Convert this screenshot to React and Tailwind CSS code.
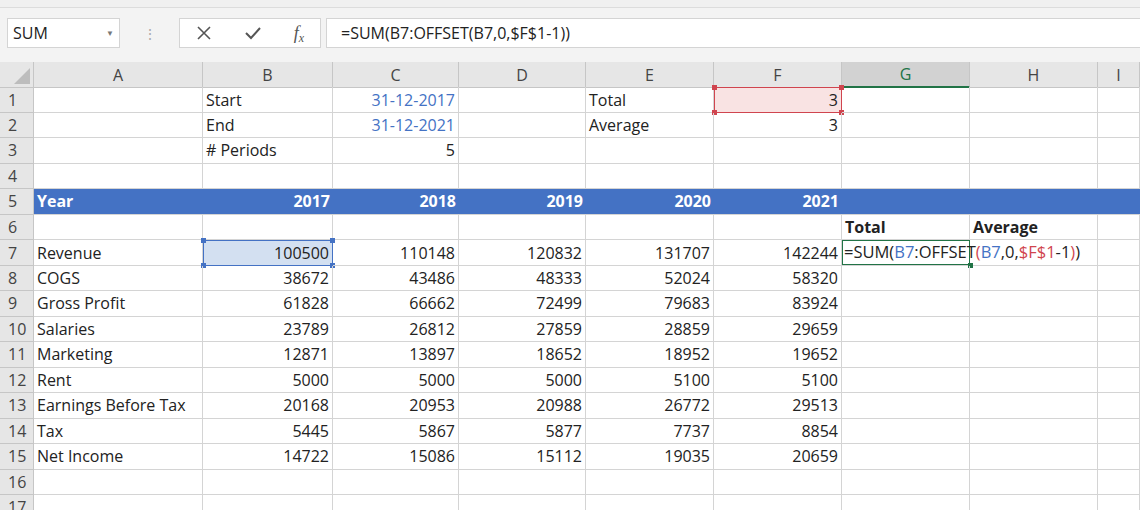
import React from "react";

const tpl = "grid-cols-[34px_169px_130px_126px_127px_128px_128px_128px_128px_42px]";
const letters = ["A", "B", "C", "D", "E", "F", "G", "H", "I"];

const data = [
  ["Revenue", 100500, 110148, 120832, 131707, 142244],
  ["COGS", 38672, 43486, 48333, 52024, 58320],
  ["Gross Profit", 61828, 66662, 72499, 79683, 83924],
  ["Salaries", 23789, 26812, 27859, 28859, 29659],
  ["Marketing", 12871, 13897, 18652, 18952, 19652],
  ["Rent", 5000, 5000, 5000, 5100, 5100],
  ["Earnings Before Tax", 20168, 20953, 20988, 26772, 29513],
  ["Tax", 5445, 5867, 5877, 7737, 8854],
  ["Net Income", 14722, 15086, 15112, 19035, 20659],
];

function Cell({ children, className = "" }) {
  return (
    <div className={"h-full border-r border-b border-[#d4d4d4] px-[3px] flex items-center whitespace-nowrap overflow-visible relative " + className}>
      {children}
    </div>
  );
}

function RowHead({ n }) {
  return (
    <div className="h-full bg-[#e6e6e6] border-r border-b border-[#c6c6c6] flex items-center pl-[8px] text-[#444]">{n}</div>
  );
}

function Row({ n, cells }) {
  return (
    <div className={"grid h-[25.5px] " + tpl}>
      <RowHead n={n} />
      {cells.map((c, i) => (
        <div key={i} className="h-full min-w-0">{c}</div>
      ))}
    </div>
  );
}

const empty = (k) => <Cell key={k} />;

function Handles({ color }) {
  return (
    <>
      <span className={"absolute -left-[3px] -top-[3px] w-[5px] h-[5px] " + color} />
      <span className={"absolute -right-[3px] -top-[3px] w-[5px] h-[5px] " + color} />
      <span className={"absolute -left-[3px] -bottom-[3px] w-[5px] h-[5px] " + color} />
      <span className={"absolute -right-[3px] -bottom-[3px] w-[5px] h-[5px] " + color} />
    </>
  );
}

export default function App() {
  const rows = [];
  rows.push(
    <Row key={1} n={1} cells={[
      empty(0),
      <Cell>Start</Cell>,
      <Cell className="justify-end text-[#4472c4]">31-12-2017</Cell>,
      empty(3),
      <Cell>Total</Cell>,
      <Cell className="justify-end bg-[#f9e3e3] !border-[#d0454f] border-[1.5px]">
        <span>3</span>
        <Handles color="bg-[#d0454f]" />
      </Cell>,
      empty(6), empty(7), empty(8),
    ]} />
  );
  rows.push(
    <Row key={2} n={2} cells={[
      empty(0), <Cell>End</Cell>,
      <Cell className="justify-end text-[#4472c4]">31-12-2021</Cell>,
      empty(3), <Cell>Average</Cell>,
      <Cell className="justify-end">3</Cell>, empty(6), empty(7), empty(8),
    ]} />
  );
  rows.push(
    <Row key={3} n={3} cells={[
      empty(0), <Cell># Periods</Cell>, <Cell className="justify-end">5</Cell>,
      empty(3), empty(4), empty(5), empty(6), empty(7), empty(8),
    ]} />
  );
  rows.push(<Row key={4} n={4} cells={[0,1,2,3,4,5,6,7,8].map(empty)} />);
  const band = "h-full bg-[#4472c4] text-white font-bold flex items-center px-[3px] border-b border-[#d4d4d4]";
  rows.push(
    <Row key={5} n={5} cells={[
      <div className={band}>Year</div>,
      ...[2017, 2018, 2019, 2020, 2021].map((y) => <div key={y} className={band + " justify-end"}>{y}</div>),
      <div className={band} />, <div className={band} />, <div className={band} />,
    ]} />
  );
  rows.push(
    <Row key={6} n={6} cells={[
      empty(0), empty(1), empty(2), empty(3), empty(4), empty(5),
      <Cell className="font-bold">Total</Cell>, <Cell className="font-bold">Average</Cell>, empty(8),
    ]} />
  );
  data.forEach((r, idx) => {
    const n = 7 + idx;
    const cells = [<Cell>{r[0]}</Cell>];
    for (let i = 1; i <= 5; i++) {
      if (n === 7 && i === 1) {
        cells.push(
          <Cell className="justify-end bg-[#d3e0f1] !border-[#4472c4] border-[1.5px]">
            {r[i]}
            <Handles color="bg-[#4472c4]" />
          </Cell>
        );
      } else cells.push(<Cell className="justify-end">{r[i]}</Cell>);
    }
    if (n === 7) {
      cells.push(
        <div className="h-full border-b border-[#d4d4d4] relative">
          <div className="absolute inset-0 border-[1.5px] border-[#217346]" />
          <span className="absolute right-[-3px] bottom-[-3px] w-[5px] h-[5px] bg-[#217346]" />
          <span className="absolute left-[2px] top-0 h-full flex items-center whitespace-nowrap z-10 text-[16.5px]">
            =SUM(<span className="text-[#4472c4]">B7</span>:OFFSET<span className="text-[#d0454f]">(</span><span className="text-[#4472c4]">B7</span>,0,<span className="text-[#d0454f]">$F$1</span>-1<span className="text-[#d0454f]">)</span>)
          </span>
        </div>
      );
      cells.push(<div className="h-full border-r border-b border-[#d4d4d4]" />, empty(8));
    } else {
      cells.push(empty(6), empty(7), empty(8));
    }
    rows.push(<Row key={n} n={n} cells={cells} />);
  });
  rows.push(<Row key={16} n={16} cells={[0,1,2,3,4,5,6,7,8].map(empty)} />);
  rows.push(<Row key={17} n={17} cells={[0,1,2,3,4,5,6,7,8].map(empty)} />);

  return (
    <div className="w-[1140px] h-[510px] overflow-hidden bg-white text-[#222] text-[16px]" style={{ fontFamily: "'Open Sans', 'Noto Sans', sans-serif" }}>
      <div className="h-[8px] bg-[#f0f0f0] border-b border-[#dcdcdc]" />
      <div className="h-[54px] bg-[#f3f3f3] flex items-start pt-[10px] pl-[7px]">
        <div className="w-[113px] h-[30px] bg-white border border-[#d4d4d4] flex items-center px-[5px] text-[16px]">
          <span className="flex-1">SUM</span>
          <span className="text-[8px] text-[#777]">▼</span>
        </div>
        <div className="w-[59px] h-[30px] flex items-center justify-center text-[#aaa] text-[14px]">⋮</div>
        <div className="w-[142px] h-[30px] bg-white border border-[#d4d4d4] flex items-center justify-around text-[#555]">
          <svg width="16" height="16" viewBox="0 0 16 16"><path d="M2 2L14 14M14 2L2 14" stroke="#555" strokeWidth="1.6" /></svg>
          <svg width="18" height="16" viewBox="0 0 18 16"><path d="M2 8L7 13L16 3" stroke="#555" strokeWidth="2" fill="none" /></svg>
          <span className="italic text-[18px]" style={{ fontFamily: "'Liberation Serif', serif" }}>f<sub className="text-[12px]">x</sub></span>
        </div>
        <div className="w-[5px]" />
        <div className="flex-1 h-[30px] bg-white border border-[#d4d4d4] border-r-0 flex items-center pl-[14px] text-[16px]">=SUM(B7:OFFSET(B7,0,$F$1-1))</div>
      </div>
      <div className={"grid h-[25px] " + tpl}>
        <div className="h-full bg-[#e6e6e6] border-r border-b border-[#c6c6c6] relative">
          <svg className="absolute right-[3px] bottom-[3px]" width="16" height="16" viewBox="0 0 16 16"><path d="M16 0L16 16L0 16Z" fill="#bdbdbd" /></svg>
        </div>
        {letters.map((l) => (
          <div key={l} className={"h-full flex items-center justify-center border-r border-[#c6c6c6] " + (l === "G" ? "bg-[#d2d2d2] text-[#217346] border-b-2 border-b-[#217346]" : "bg-[#e6e6e6] text-[#444] border-b border-b-[#c6c6c6]")}>{l}</div>
        ))}
      </div>
      {rows}
    </div>
  );
}
